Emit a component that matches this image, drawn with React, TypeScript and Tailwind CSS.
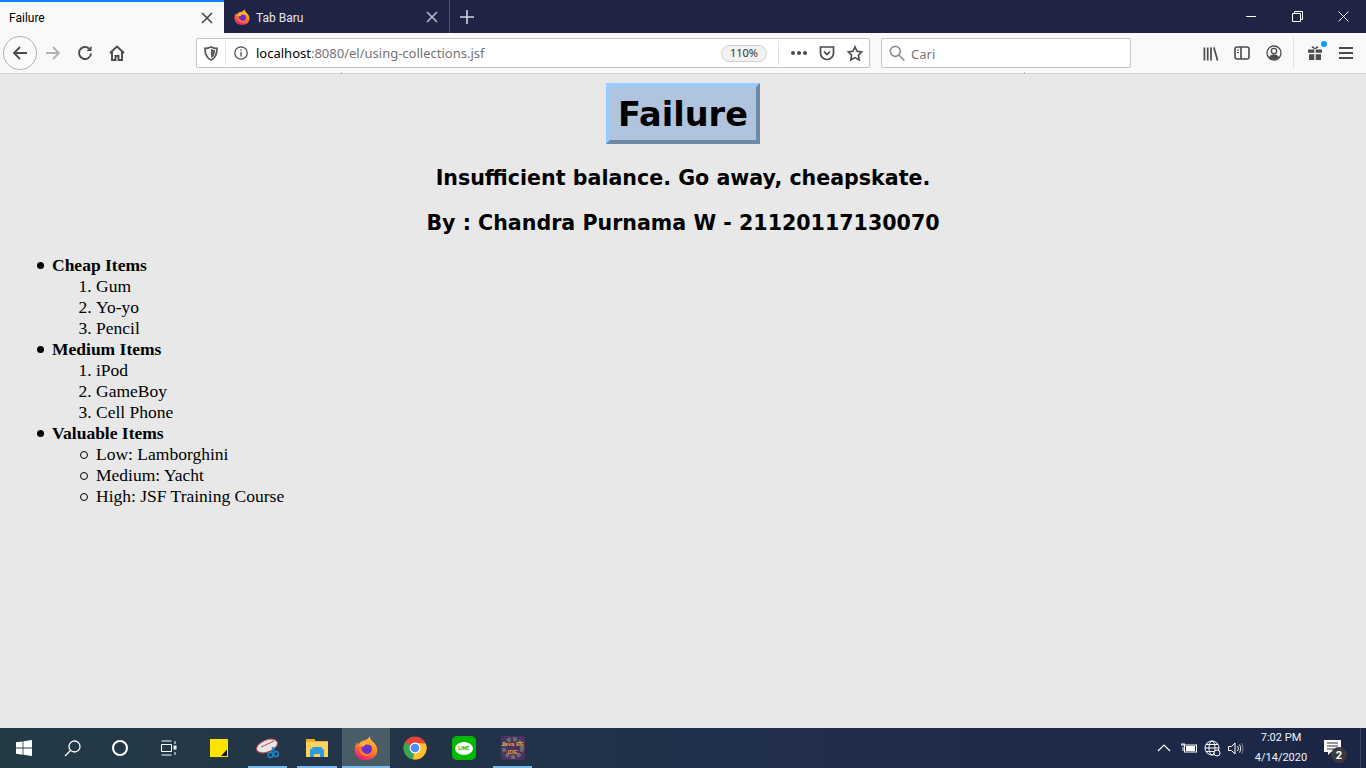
import React from "react";

function FirefoxIcon({ size = 16, id }: { size?: number; id: string }) {
  return (
    <svg width={size} height={size} viewBox="0 0 32 32">
      <defs>
        <linearGradient id={id} x1="0.75" y1="0" x2="0.3" y2="1">
          <stop offset="0" stopColor="#ffd23a" />
          <stop offset="0.45" stopColor="#ff8a1f" />
          <stop offset="1" stopColor="#f0177a" />
        </linearGradient>
      </defs>
      <path
        d="M21 0c0 3 1.500 5.500 4.500 8 3.500 3 5.500 6.500 5.500 11 0 7.500-6.500 13-15 13S1 26.500 1 18.500c0-4 1-7.500 3.500-10.500 0 1.500.5 3 1.500 4 .5-3 3-5.500 6.500-6 3.500-.5 7-2 8.500-6z"
        fill={`url(#${id})`}
      />
      <circle cx="17" cy="17" r="7" fill="#6a30c8" />
      <path d="M7 16c0 7 5 11 11 10.500 3-.3 5.500-2.500 6.500-5-2.500 2.500-6.500 3.500-9.500 2-3-1.500-4.500-4-8-7.500z" fill="#ff8a22" />
      <path d="M5.500 12.500c2-3.500 6-5 10-4.500 3.500.5 6 2.500 7.500 5-2.500-1.800-5.500-2.300-8-1.300-1 .5-1.500 1.300-1.500 2.300-3 0-5.500-.2-8-1.500z" fill="#ffb035" />
    </svg>
  );
}

function TabClose({ color }: { color: string }) {
  return (
    <svg width="12" height="12" viewBox="0 0 12 12" fill="none" stroke={color} strokeWidth="1.700">
      <path d="M1 1l10 10M11 1L1 11" />
    </svg>
  );
}

function TabBar() {
  return (
    <div className="flex h-[33px] bg-[#1f2344] font-['Roboto',sans-serif]">
      <div className="flex h-[33px] w-[224px] items-center justify-between border-t-2 border-[#0a84ff] bg-[#f9f9fa] pr-[11px] pl-[9px]">
        <span className="text-[12px] text-black">Failure</span>
        <TabClose color="#4a4a4f" />
      </div>
      <div className="flex h-[33px] w-[226px] items-center justify-between border-r border-[#4f5270] pr-[11px] pl-[10px]">
        <div className="flex items-center gap-[6px]">
          <FirefoxIcon id="ffTab" />
          <span className="pt-[2px] text-[12px] text-[#e6e7ee]">Tab Baru</span>
        </div>
        <TabClose color="#b4b5c2" />
      </div>
      <div className="flex w-[33px] items-center justify-center">
        <svg width="14" height="14" viewBox="0 0 14 14" stroke="#d4d5de" strokeWidth="1.600">
          <path d="M7 0v14M0 7h14" />
        </svg>
      </div>
      <div className="ml-auto flex">
        <div className="flex w-[46px] items-center justify-center">
          <div className="h-px w-[10px] bg-white" />
        </div>
        <div className="flex w-[46px] items-center justify-center">
          <svg width="11" height="11" viewBox="0 0 11 11" fill="none" stroke="#fff">
            <path d="M.5 2.500h8v8h-8zM2.500 2.500v-2h8v8h-2" />
          </svg>
        </div>
        <div className="flex w-[46px] items-center justify-center">
          <svg width="11" height="11" viewBox="0 0 11 11" stroke="#fff">
            <path d="M.5.5l10 10M10.500.5l-10 10" />
          </svg>
        </div>
      </div>
    </div>
  );
}

function NavBar() {
  return (
    <div className="relative flex h-[41px] items-center border-b border-[#d4d4d6] bg-[#f9f9fa]">
      <div className="ml-[3px] flex h-[34px] w-[34px] items-center justify-center rounded-full border border-[#b1b1b3] bg-[#fbfbfb]">
        <svg width="16" height="16" viewBox="0 0 16 16" fill="none" stroke="#4a4a4f" strokeWidth="1.800">
          <path d="M15 8H2M8 2L2 8l6 6" />
        </svg>
      </div>
      <div className="ml-[8px] flex w-[16px] justify-center">
        <svg width="16" height="16" viewBox="0 0 16 16" fill="none" stroke="#b1b1b3" strokeWidth="1.800">
          <path d="M1 8h13M8 2l6 6-6 6" />
        </svg>
      </div>
      <div className="ml-[16px] flex w-[16px] justify-center">
        <svg width="16" height="16" viewBox="0 0 16 16" fill="none" stroke="#4a4a4f" strokeWidth="2">
          <path d="M14 8.500A6 6 0 1 1 12 3.500" />
          <path d="M14.500 1v5h-5z" fill="#4a4a4f" stroke="none" />
        </svg>
      </div>
      <div className="ml-[16px] flex w-[16px] justify-center">
        <svg width="16" height="16" viewBox="0 0 16 16" fill="none" stroke="#4a4a4f" strokeWidth="1.900">
          <path d="M1 8l7-6.500L15 8M3 6.500V15h3.500v-4h3v4H13V6.500" />
        </svg>
      </div>

      <div className="ml-[71px] flex h-[30px] w-[674px] items-center rounded-[2px] border border-[#c4c4c6] bg-white">
        <div className="flex w-[28px] justify-center">
          <svg width="14" height="15" viewBox="0 0 14 15" fill="none" stroke="#5b5b5f" strokeWidth="1.800">
            <path d="M1 2.500C3 2.500 5 2 7 1c2 1 4 1.500 6 1.500 0 6-1.500 9.500-6 11.500C2.500 12 1 8.500 1 2.500z" />
            <path d="M7 3c1.500.5 2.500 1 4 1 0 4-1 6.500-4 8z" fill="#5b5b5f" stroke="none" />
          </svg>
        </div>
        <div className="h-[24px] w-px bg-[#e2e2e3]" />
        <div className="flex w-[30px] justify-center">
          <svg width="14" height="14" viewBox="0 0 14 14" fill="none" stroke="#4a4a4f" strokeWidth="1.300">
            <circle cx="7" cy="7" r="6.200" />
            <path d="M7 6v4.500M7 3.300v1.500" />
          </svg>
        </div>
        <span className="pt-[2px] text-[13px] text-black">
          localhost<span className="text-[#737373]">:8080/el/using-collections.jsf</span>
        </span>
        <div className="ml-auto flex h-[17px] w-[46px] items-center justify-center rounded-full border border-[#cfcfd0] bg-[#f2f2f3] text-[11px] text-[#333]">
          110%
        </div>
        <div className="ml-[11px] h-[24px] w-px bg-[#e2e2e3]" />
        <div className="ml-[12px] flex w-[16px] justify-center gap-[2px]">
          <div className="h-[4px] w-[4px] rounded-full bg-[#4a4a4f]" />
          <div className="h-[4px] w-[4px] rounded-full bg-[#4a4a4f]" />
          <div className="h-[4px] w-[4px] rounded-full bg-[#4a4a4f]" />
        </div>
        <div className="ml-[12px] flex w-[16px] justify-center">
          <svg width="16" height="16" viewBox="0 0 16 16" fill="none" stroke="#4a4a4f" strokeWidth="1.700">
            <path d="M1.500 2h13v6a6.500 6.500 0 0 1-13 0z" />
            <path d="M5 6.500l3 3 3-3" />
          </svg>
        </div>
        <div className="ml-[12px] flex w-[16px] justify-center">
          <svg width="17" height="17" viewBox="0 0 17 17" fill="none" stroke="#4a4a4f" strokeWidth="1.700">
            <path d="M8.500 1.500l2.200 4.600 5 .7-3.600 3.500.9 5-4.500-2.400L4 15.300l.9-5L1.300 6.800l5-.7z" />
          </svg>
        </div>
        <div className="w-[6px]" />
      </div>

      <div className="ml-[11px] flex h-[30px] w-[250px] items-center rounded-[2px] border border-[#c4c4c6] bg-white pl-[7px]">
        <svg width="16" height="16" viewBox="0 0 16 16" fill="none" stroke="#8f8f92" strokeWidth="1.700">
          <circle cx="6.300" cy="6.300" r="5" />
          <path d="M10 10l5.300 5.300" />
        </svg>
        <span className="ml-[6px] pt-[3px] text-[13px] text-[#757575]">Cari</span>
      </div>

      <div className="ml-[72px] flex w-[16px] justify-center">
        <svg width="17" height="15" viewBox="0 0 17 15" stroke="#4a4a4f" strokeWidth="1.800" fill="none">
          <path d="M1.500 1v14M5 1v14M8.500 1v14M11.500 1l4 14" />
        </svg>
      </div>
      <div className="ml-[15px] flex w-[16px] justify-center">
        <svg width="16" height="14" viewBox="0 0 16 14" fill="none" stroke="#4a4a4f" strokeWidth="1.600">
          <rect x="1" y="1" width="14" height="12" rx="2" />
          <path d="M7 1v12" />
          <path d="M3 4h2M3 6.500h2" strokeWidth="1.200" />
        </svg>
      </div>
      <div className="ml-[16px] flex w-[16px] justify-center">
        <svg width="16" height="16" viewBox="0 0 16 16" fill="none" stroke="#4a4a4f" strokeWidth="1.300">
          <circle cx="8" cy="8" r="7" />
          <circle cx="8" cy="6" r="2.700" />
          <path d="M3 12.500c1-2.500 3-3 5-3s4 .5 5 3c-1.500 1.500-3 2-5 2s-3.500-.5-5-2z" fill="#4a4a4f" stroke="none" />
        </svg>
      </div>
      <div className="ml-[11px] h-[32px] w-px bg-[#e0e0e1]" />
      <div className="relative ml-[13px] flex w-[16px] justify-center">
        <svg width="16" height="16" viewBox="0 0 16 16" fill="#4a4a4f">
          <path d="M1 4.500h6.300v3.300H1zM8.700 4.500H15v3.300H8.700zM2 9.200h5.300V15H2zM8.700 9.200H14V15H8.700z" />
          <path d="M8 4.200L4.500 2.500 5.500 1 8 3l2.500-2 1 1.500z" />
        </svg>
        <div className="absolute top-[-4px] right-[-4px] h-[6px] w-[6px] rounded-full bg-[#0a9dff]" />
      </div>
      <div className="ml-[15px] flex w-[16px] justify-center">
        <svg width="14" height="12" viewBox="0 0 14 12" stroke="#4a4a4f" strokeWidth="1.800">
          <path d="M0 1h14M0 6h14M0 11h14" />
        </svg>
      </div>
      <div className="absolute bottom-[-1px] left-[341px] h-[2px] w-px bg-[#b8b8ba]" />
      <div className="absolute bottom-[-1px] left-[1024px] h-[2px] w-px bg-[#b8b8ba]" />
    </div>
  );
}

function SimpleList({ items, ordered }: { items: string[]; ordered?: boolean }) {
  if (ordered) {
    return (
      <ol className="list-decimal pl-[44px]">
        {items.map((item) => (
          <li key={item}>{item}</li>
        ))}
      </ol>
    );
  }
  return (
    <ul className="list-none pl-[44px]">
      {items.map((item) => (
        <li
          key={item}
          className="relative before:absolute before:top-[7px] before:left-[-16px] before:h-[8px] before:w-[8px] before:rounded-full before:border before:border-black"
        >
          {item}
        </li>
      ))}
    </ul>
  );
}

function Group({ title, children }: { title: string; children: React.ReactNode }) {
  return (
    <li className="relative before:absolute before:top-[7px] before:left-[-15px] before:h-[7px] before:w-[7px] before:rounded-full before:bg-black">
      <b>{title}</b>
      {children}
    </li>
  );
}

function Page() {
  const headingFont = "font-['DejaVu_Sans',sans-serif] font-bold text-black";
  return (
    <div className="min-h-0 flex-1 bg-[#e8e8e8] px-[8px] pt-[9px] font-['Liberation_Serif',serif] text-[17.500px] leading-[21px] text-black">
      <div className="flex flex-col items-center">
        <h1
          className={`${headingFont} border-4 border-t-[#99ccff] border-r-[#6c8aa8] border-b-[#6c8aa8] border-l-[#99ccff] bg-[#b0c4de] px-[8px] pt-[2px] text-[33.600px] leading-[51px]`}
        >
          Failure
        </h1>
        <h2 className={`${headingFont} mt-[21px] text-[20.600px] leading-[26px]`}>
          Insufficient balance. Go away, cheapskate.
        </h2>
        <h2 className={`${headingFont} mt-[19px] text-[20.600px] leading-[26px]`}>
          By : Chandra Purnama W - 21120117130070
        </h2>
      </div>
      <ul className="mt-[19px] list-none pl-[44px]">
        <Group title="Cheap Items">
          <SimpleList ordered items={["Gum", "Yo-yo", "Pencil"]} />
        </Group>
        <Group title="Medium Items">
          <SimpleList ordered items={["iPod", "GameBoy", "Cell Phone"]} />
        </Group>
        <Group title="Valuable Items">
          <SimpleList items={["Low: Lamborghini", "Medium: Yacht", "High: JSF Training Course"]} />
        </Group>
      </ul>
    </div>
  );
}

function TaskItem({
  children,
  active,
  running,
  width = "w-[49px]",
}: {
  children: React.ReactNode;
  active?: boolean;
  running?: boolean;
  width?: string;
}) {
  return (
    <div className={`relative flex h-[40px] items-center justify-center ${width} ${active ? "bg-[#4a5d66]" : ""}`}>
      {children}
      {running && (
        <div className={`absolute bottom-0 h-[2px] bg-[#76b9ed] ${active ? "inset-x-0" : "inset-x-[5px]"}`} />
      )}
    </div>
  );
}

function Taskbar() {
  return (
    <div className="flex h-[40px] items-center bg-linear-to-r from-[#243a45] via-[#21304a] to-[#1b2647] font-['Roboto',sans-serif]">
      <TaskItem width="w-[48px]">
        <svg width="16" height="16" viewBox="0 0 16 16" fill="#fff">
          <path d="M0 2.300l6.600-.9v6.200H0zM7.400 1.300L16 0v7.600H7.400zM0 8.400h6.600v6.300L0 13.800zM7.400 8.400H16V16l-8.600-1.200z" />
        </svg>
      </TaskItem>
      <TaskItem width="w-[48px]">
        <svg width="17" height="17" viewBox="0 0 17 17" fill="none" stroke="#fff" strokeWidth="1.300">
          <circle cx="10.500" cy="6.500" r="5.500" />
          <path d="M6.500 10.500L1 16" />
        </svg>
      </TaskItem>
      <TaskItem width="w-[48px]">
        <div className="h-[16px] w-[16px] rounded-full border-2 border-white" />
      </TaskItem>
      <TaskItem width="w-[50px]">
        <svg width="16" height="16" viewBox="0 0 16 16" fill="none" stroke="#fff">
          <path d="M.5 1h10M.5 15h10M.5 4.500h10v7H.5z" />
          <path d="M14 1v3M14 12v3" />
          <rect x="12.500" y="5.500" width="3" height="4" fill="#fff" stroke="none" />
        </svg>
      </TaskItem>
      <TaskItem>
        <svg width="18" height="18" viewBox="0 0 18 18">
          <rect width="18" height="18" fill="#fde300" />
          <path d="M11 17L17 10.500V17z" fill="#1b1b1b" />
        </svg>
      </TaskItem>
      <TaskItem running>
        <svg width="24" height="24" viewBox="0 0 24 24">
          <ellipse cx="11" cy="10" rx="11" ry="6" transform="rotate(-22 11 10)" fill="#e9e6e6" stroke="#c2474f" strokeWidth="1" />
          <path d="M5 11l13-6" stroke="#c2474f" strokeWidth="1" />
          <circle cx="14.500" cy="19" r="2.500" fill="none" stroke="#1c86c8" strokeWidth="1.500" />
          <circle cx="20" cy="18" r="2.500" fill="none" stroke="#1c86c8" strokeWidth="1.500" />
          <path d="M15 17l3-6M19 16l-3-5" stroke="#1c86c8" strokeWidth="1.300" />
        </svg>
      </TaskItem>
      <TaskItem running width="w-[50px]">
        <svg width="22" height="20" viewBox="0 0 22 20">
          <path d="M0 1h8l2 2h12v3H0z" fill="#e8b021" />
          <rect y="4" width="22" height="15" fill="#fbd25f" />
          <path d="M4 19v-7l3-3h8l3 3v7h-4v-3H8v3z" fill="#2e9ae0" />
        </svg>
      </TaskItem>
      <TaskItem running active width="w-[48px]">
        <FirefoxIcon id="ffTask" size={24} />
      </TaskItem>
      <TaskItem>
        <svg width="24" height="24" viewBox="0 0 24 24">
          <circle cx="12" cy="12" r="11.500" fill="#e8453c" />
          <path d="M12 12L1.800 6.500A11.500 11.500 0 0 0 10 23.300z" fill="#34a853" />
          <path d="M12 12l-2 11.300A11.500 11.500 0 0 0 22.700 7.500L12 7z" fill="#fbc02d" />
          <circle cx="12" cy="12" r="5.500" fill="#fff" />
          <circle cx="12" cy="12" r="4.300" fill="#4a8df6" />
        </svg>
      </TaskItem>
      <TaskItem>
        <div className="flex h-[24px] w-[24px] items-center justify-center rounded-[5px] bg-[#00b900]">
          <div className="flex h-[13px] w-[18px] items-center justify-center rounded-[50%] bg-white text-[5px] leading-none font-bold text-[#00b900]">
            LINE
          </div>
        </div>
      </TaskItem>
      <TaskItem running>
        <div className="relative flex h-[24px] w-[24px] flex-col items-center justify-center overflow-hidden rounded-[2px] bg-[#46335f] font-['Liberation_Sans',sans-serif] text-[6px] leading-[8px] font-bold text-[#ef9a3c]">
          <svg className="absolute inset-0" width="24" height="24" viewBox="0 0 24 24" fill="none" stroke="#6f6a70" strokeWidth="4">
            <circle cx="12" cy="12" r="9" strokeDasharray="4 2" />
          </svg>
          <span className="relative whitespace-nowrap">Java EE</span>
          <span className="relative">IDE</span>
        </div>
      </TaskItem>

      <div className="ml-auto flex h-full items-center text-white">
        <svg width="14" height="8" viewBox="0 0 14 8" fill="none" stroke="#fff" strokeWidth="1.200">
          <path d="M1 7l6-6 6 6" />
        </svg>
        <svg className="ml-[10px]" width="16" height="12" viewBox="0 0 16 12" fill="none" stroke="#fff">
          <rect x="3.500" y="3" width="12" height="7" />
          <rect x="5" y="4" width="9" height="5" fill="#fff" stroke="none" />
          <path d="M0 3h4M1 1v2M3 1v2M2 5v4" />
        </svg>
        <svg className="ml-[7px]" width="17" height="17" viewBox="0 0 17 17" fill="none" stroke="#fff">
          <circle cx="8" cy="8" r="7" />
          <ellipse cx="8" cy="8" rx="3" ry="7" />
          <path d="M1 8h14M2 4.500h12M2 11.500h12" />
          <circle cx="13" cy="13" r="3" fill="#1d2a48" />
        </svg>
        <svg className="ml-[7px]" width="16" height="13" viewBox="0 0 16 13" fill="none" stroke="#fff">
          <path d="M.5 4.500h3L7 1v11L3.500 8.500h-3z" />
          <path d="M9.500 4c1 1.500 1 3.500 0 5M11.500 2.500c1.500 2.500 1.500 5.500 0 8" />
          <path d="M13.500 1c2 3 2 8 0 11" stroke="#7c8598" />
        </svg>
        <div className="ml-[6px] flex w-[62px] flex-col items-center text-[11px] leading-[20px] text-[#f2f3f6]">
          <span>7:02 PM</span>
          <span>4/14/2020</span>
        </div>
        <div className="relative mr-[19px] ml-[12px]">
          <svg width="17" height="16" viewBox="0 0 17 16" fill="#fff">
            <path d="M0 0h17v12H7l-3 3v-3H0z" />
            <path d="M3 3h11M3 6h11M3 9h7" stroke="#333" strokeWidth="1" />
          </svg>
          <div className="absolute top-[7px] left-[7px] flex h-[16px] w-[16px] items-center justify-center rounded-full bg-[#3a3a3c] text-[11px] leading-none font-bold text-white">
            2
          </div>
        </div>
        <div className="mr-[5px] h-full w-px bg-[#3c4663]" />
      </div>
    </div>
  );
}

export default function App() {
  return (
    <div className="flex h-[768px] w-[1366px] flex-col overflow-hidden font-['Noto_Sans',sans-serif]">
      <TabBar />
      <NavBar />
      <Page />
      <Taskbar />
    </div>
  );
}
